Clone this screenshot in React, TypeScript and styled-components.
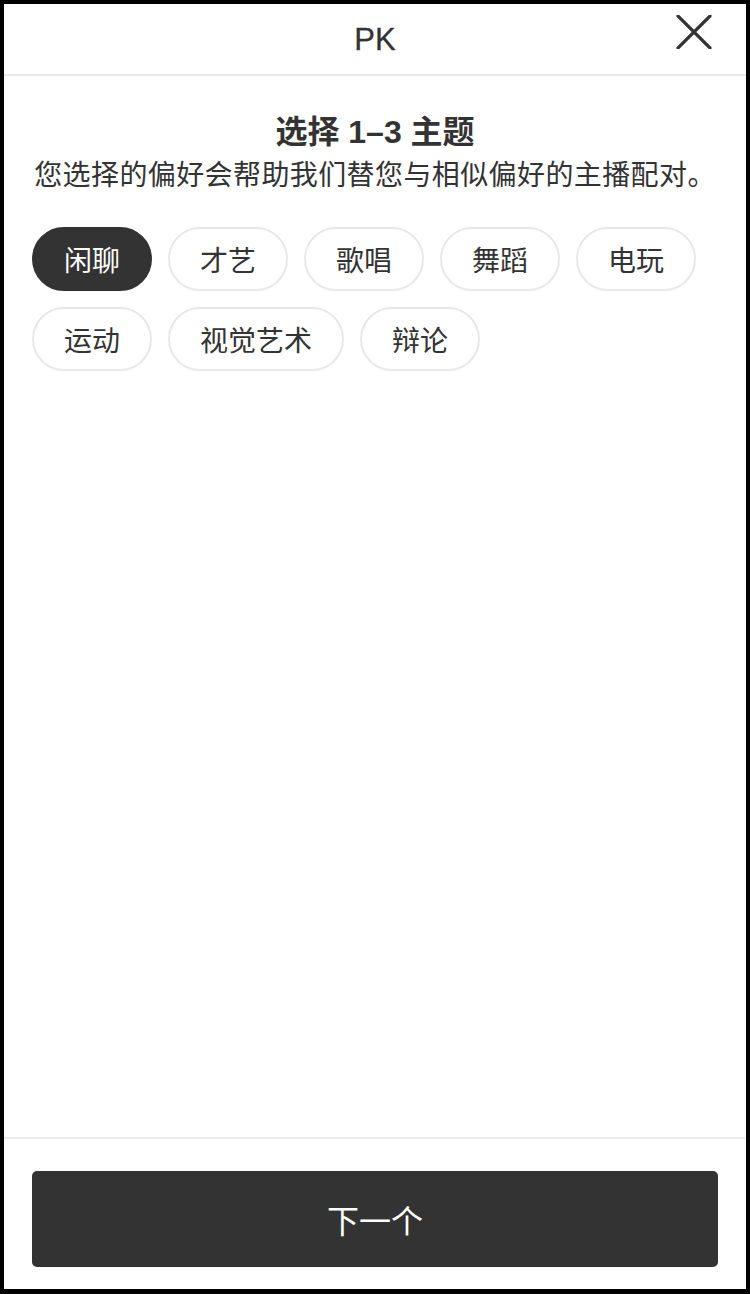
import React from 'react';
import styled, { createGlobalStyle } from 'styled-components';

const topics = ['闲聊', '才艺', '歌唱', '舞蹈', '电玩', '运动', '视觉艺术', '辩论'];

function CloseIcon() {
	return (
		<svg width="36" height="34" viewBox="0 0 36 34" fill="none">
			<path
				d="M2 1 L34 33 M34 1 L2 33"
				stroke="#333"
				strokeWidth="3.2"
				strokeLinecap="round"
			/>
		</svg>
	);
}

function App() {
	const [selected, setSelected] = React.useState<Array<string>>(['闲聊']);

	const toggle = (topic: string) => {
		if (selected.includes(topic)) {
			setSelected(selected.filter(t => t != topic));
		} else if (selected.length < 3) {
			setSelected([...selected, topic]);
		}
	};

	return (
		<>
			<GlobalStyle />
			<Frame>
				<Header>
					<span />
					<HeaderTitle>PK</HeaderTitle>
					<CloseButton>
						<CloseIcon />
					</CloseButton>
				</Header>
				<Content>
					<Title>选择 1–3 主题</Title>
					<Subtitle>您选择的偏好会帮助我们替您与相似偏好的主播配对。</Subtitle>
					<Chips>
						{topics.map(topic => (
							<Chip
								key={topic}
								active={selected.includes(topic)}
								onClick={() => toggle(topic)}
							>
								{topic}
							</Chip>
						))}
					</Chips>
				</Content>
				<Footer>
					<NextButton>下一个</NextButton>
				</Footer>
			</Frame>
		</>
	);
}

export default App;

const GlobalStyle = createGlobalStyle`
	* {
		box-sizing: border-box;
	}

	body {
		margin: 0;
		background: #000;
		font-family: "Liberation Sans", "Noto Sans CJK SC", sans-serif;
		color: #333;
	}
`;

const Frame = styled.div`
	width: 750px;
	height: 1294px;
	border: 4px solid #000;
	border-bottom-width: 5px;
	background-color: white;
	display: flex;
	flex-direction: column;
`;

const Header = styled.div`
	height: 72px;
	display: grid;
	grid-template-columns: 1fr auto 1fr;
	align-items: center;
	border-bottom: 2px solid #e8e8e8;
`;

const HeaderTitle = styled.div`
	font-size: 31px;
	line-height: 36px;
	color: #333;
	margin-top: 2px;
	-webkit-text-stroke: 0.3px #333;
`;

const CloseButton = styled.div`
	justify-self: end;
	align-self: start;
	margin: 11px 34px 0 0;
	display: flex;
`;

const Content = styled.div`
	flex: 1;
	padding: 36px 28px 0;
	display: flex;
	flex-direction: column;
`;

const Title = styled.div`
	font-size: 32px;
	line-height: 40px;
	font-weight: bold;
	text-align: center;
	color: #333;
`;

const Subtitle = styled.div`
	margin-top: 4px;
	font-size: 28px;
	line-height: 40px;
	letter-spacing: 0.4px;
	text-align: center;
	color: #333;
	white-space: nowrap;
`;

const Chips = styled.div`
	margin-top: 31px;
	display: flex;
	flex-wrap: wrap;
	gap: 16px;
`;

interface ChipProps {
	active?: boolean;
}
const Chip = styled.div<ChipProps>`
	height: 64px;
	padding: 0 30px;
	border-radius: 32px;
	border: 2px solid ${({ active }) => (active ? '#333' : '#e8e8e8')};
	background-color: ${({ active }) => (active ? '#333' : 'white')};
	color: ${({ active }) => (active ? 'white' : '#333')};
	font-size: 28px;
	display: flex;
	align-items: center;
	justify-content: center;
	cursor: default;
`;

const Footer = styled.div`
	border-top: 2px solid #ececec;
	padding: 32px 28px 22px;
`;

const NextButton = styled.div`
	height: 96px;
	border-radius: 5px;
	background-color: #333;
	color: white;
	font-size: 32px;
	display: flex;
	align-items: center;
	justify-content: center;
`;
